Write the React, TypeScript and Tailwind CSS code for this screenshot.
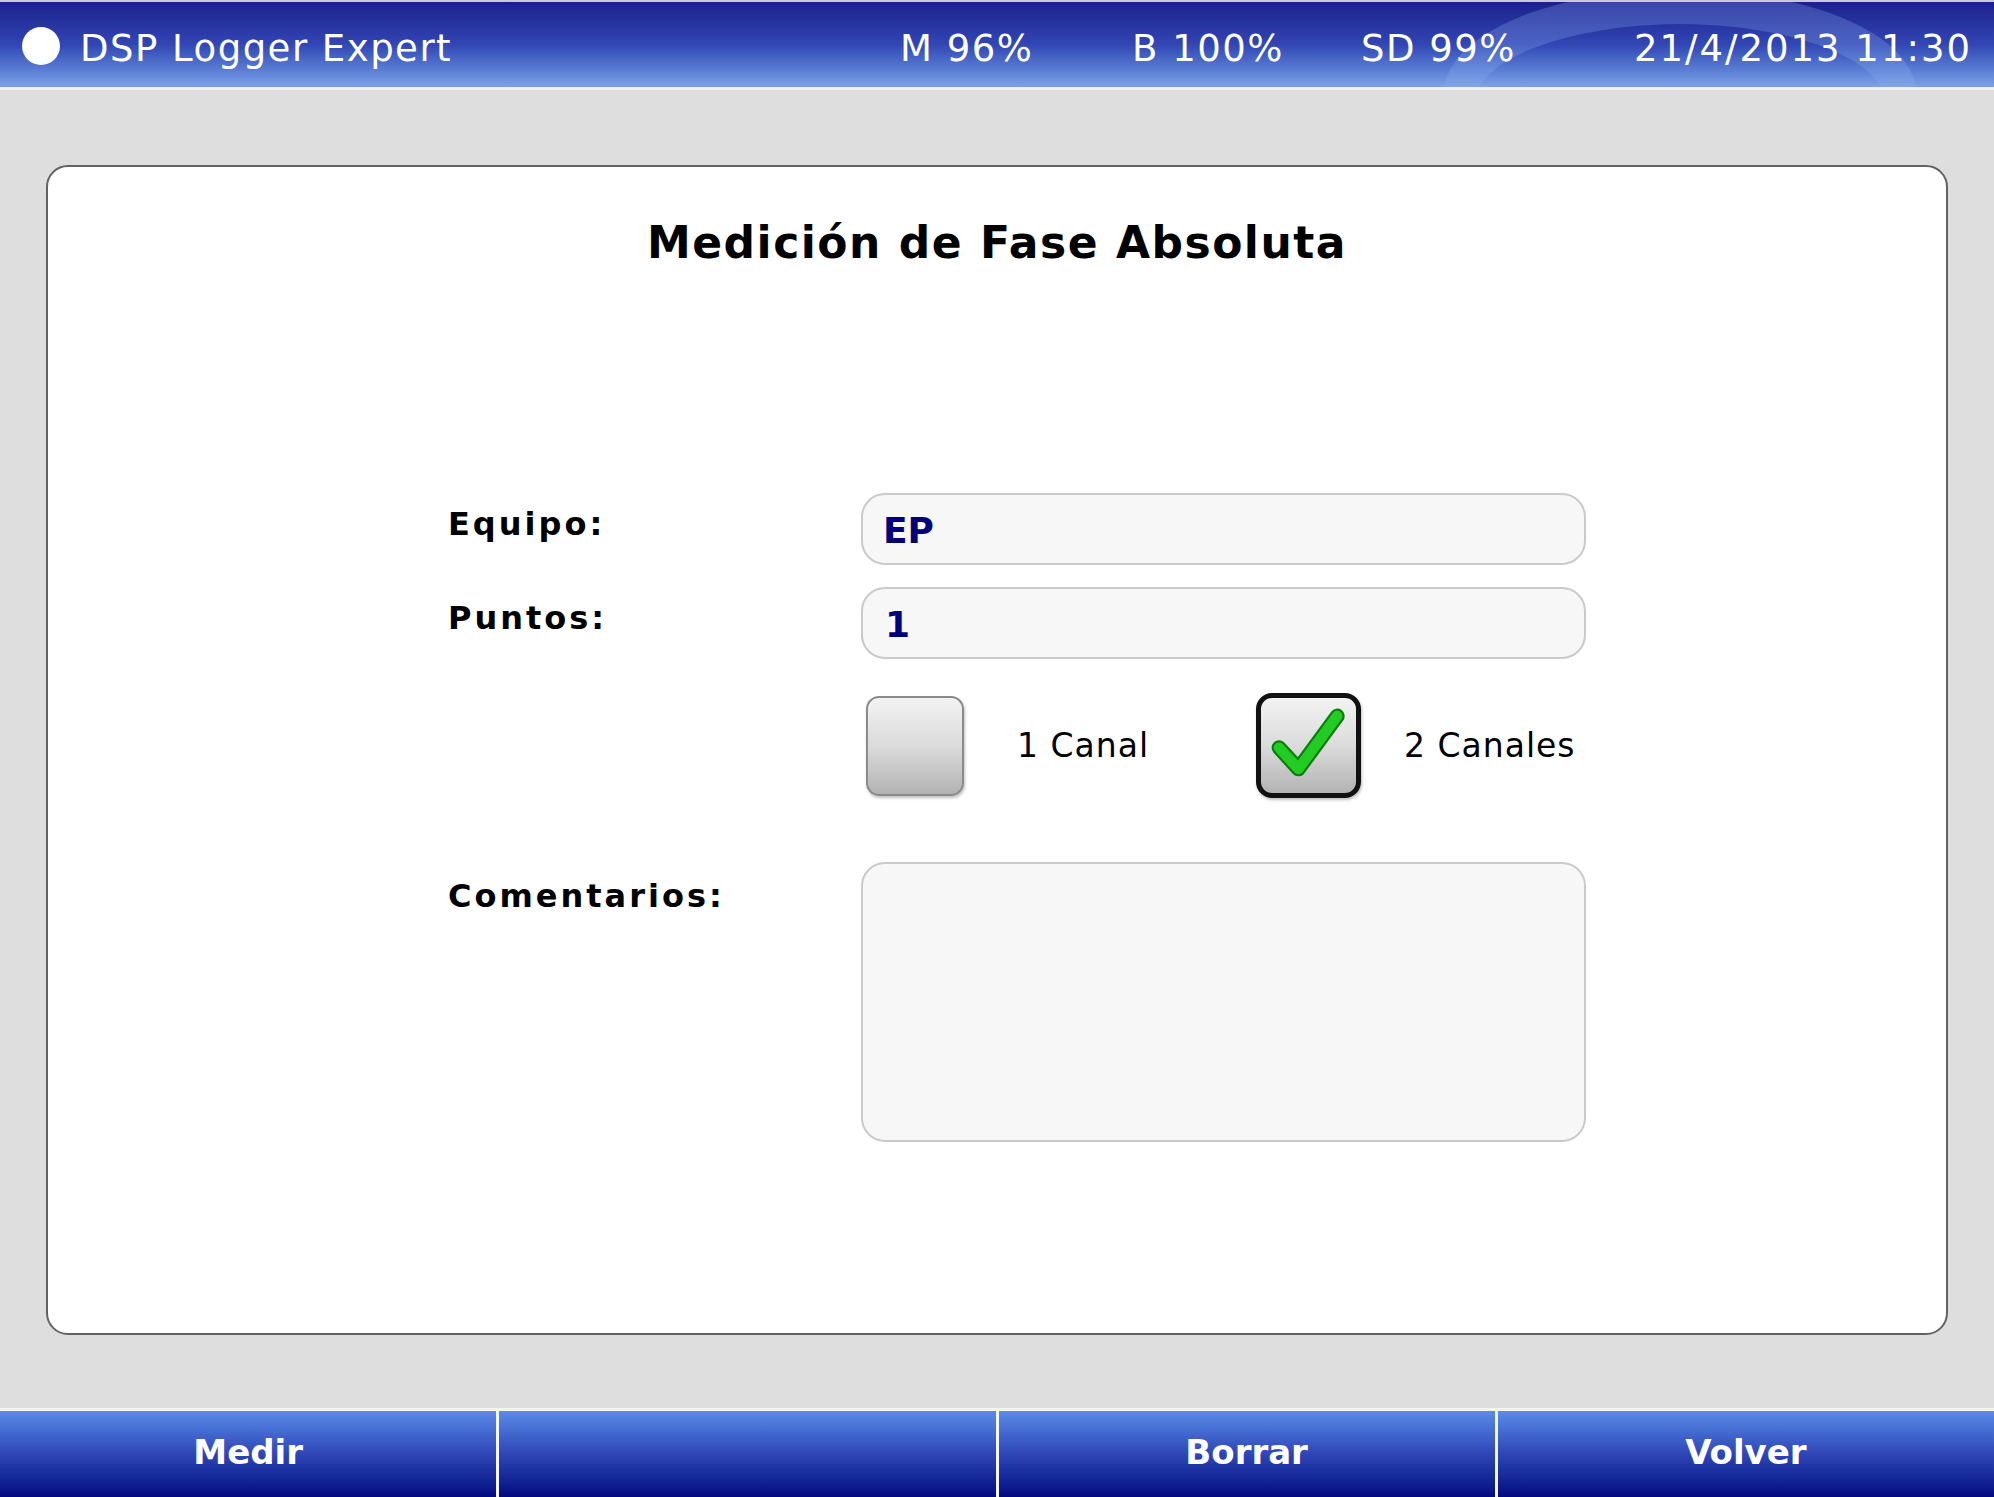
import React from "react";

const sans = { fontFamily: '"DejaVu Sans", Verdana, sans-serif' };

function CheckBox({ checked }: { checked?: boolean }) {
  return (
    <div
      className={`relative flex items-center justify-center bg-gradient-to-b from-[#f4f3f4] via-[#dcdbdc] to-[#b4b3b4] shadow-[1px_2px_3px_rgba(0,0,0,0.25)] ${
        checked
          ? "w-[105px] h-[105px] rounded-[16px] border-[5px] border-[#111]"
          : "w-[98px] h-[100px] rounded-[13px] border-2 border-[#8a8a8a]"
      }`}
    >
      {checked && (
        <svg viewBox="0 0 100 100" className="w-[88px] h-[88px]">
          <polyline
            points="16,52 38,76 82,16"
            fill="none"
            stroke="#0c7d0c"
            strokeWidth="17"
            strokeLinecap="round"
            strokeLinejoin="round"
          />
          <polyline
            points="16,52 38,76 82,16"
            fill="none"
            stroke="#22cc22"
            strokeWidth="12"
            strokeLinecap="round"
            strokeLinejoin="round"
          />
        </svg>
      )}
    </div>
  );
}

export default function App() {
  const buttons = ["Medir", "", "Borrar", "Volver"];

  return (
    <div className="w-[1994px] h-[1497px] flex flex-col bg-[#dedede] overflow-hidden" style={sans}>
      {/* top status bar */}
      <div className="relative h-[90px] shrink-0 border-t-2 border-[#c9c9d6] border-b-[3px] border-b-[#f2f0ea] bg-gradient-to-b from-[#1c1f8c] via-[#3246b4] to-[#7ba2e8] overflow-hidden">
        <svg className="absolute left-[1440px] top-0 w-[480px] h-[90px]" viewBox="0 0 480 90">
          <path d="M 20 95 A 220 90 0 0 1 460 95" fill="none" stroke="rgba(140,175,240,0.28)" strokeWidth="34" />
        </svg>
        <div className="relative h-full flex items-center pt-[8px] text-white text-[37px] leading-none tracking-[1.5px]">
          <div className="w-[900px] pl-[22px] flex items-center">
            <span className="w-[38px] h-[38px] rounded-full bg-white -mt-[6px]"></span>
            <span className="ml-[20px]">DSP Logger Expert</span>
          </div>
          <span className="w-[232px]">M 96%</span>
          <span className="w-[229px]">B 100%</span>
          <span className="w-[269px]">SD 99%</span>
          <span className="flex-1 text-right pr-[22px] tracking-[2px]">21/4/2013 11:30</span>
        </div>
      </div>

      {/* main panel */}
      <div className="flex-1 px-[46px] pt-[75px] pb-[73px]">
        <div className="h-full bg-white border-2 border-[#626262] rounded-[22px] flex flex-col">
          <h1 className="text-center font-bold text-[44px] text-black mt-[50px] leading-[52px] tracking-[1.5px]">
            Medición de Fase Absoluta
          </h1>

          <div className="mt-[224px] pl-[400px] text-[33px]">
            <div className="flex items-center">
              <span className="w-[413px] font-bold text-[32px] text-black tracking-[3px] -mt-[10px]">Equipo:</span>
              <div className="w-[725px] h-[72px] rounded-[24px] border-2 border-[#cacaca] bg-[#f7f7f7] flex items-center pl-[20px] pt-[4px]">
                <span className="font-bold text-[36px] text-[#00007a]">EP</span>
              </div>
            </div>

            <div className="flex items-center mt-[22px]">
              <span className="w-[413px] font-bold text-[32px] text-black tracking-[3px] -mt-[10px]">Puntos:</span>
              <div className="w-[725px] h-[72px] rounded-[24px] border-2 border-[#cacaca] bg-[#f7f7f7] flex items-center pl-[22px] pt-[4px]">
                <span className="font-bold text-[36px] text-[#00007a]">1</span>
              </div>
            </div>

            <div className="flex items-center mt-[34px] ml-[418px]">
              <div className="w-[390px] flex items-center">
                <CheckBox />
                <span className="ml-[53px] text-black tracking-[1px]">1 Canal</span>
              </div>
              <CheckBox checked />
              <span className="ml-[43px] text-black tracking-[1px]">2 Canales</span>
            </div>

            <div className="flex items-start mt-[64px]">
              <span className="w-[413px] font-bold text-[32px] text-black tracking-[3px] mt-[10px]">Comentarios:</span>
              <div className="w-[725px] h-[280px] rounded-[24px] border-2 border-[#cacaca] bg-[#f7f7f7]"></div>
            </div>
          </div>
        </div>
      </div>

      {/* bottom buttons */}
      <div className="h-[89px] shrink-0 flex gap-[3px] bg-[#f6f6f6] border-t-[3px] border-[#f4f2ec]">
        {buttons.map((b, i) => (
          <button
            key={i}
            className="flex-1 flex items-center justify-center pb-[4px] bg-gradient-to-b from-[#5b8ce8] via-[#2f45b6] to-[#050780] text-white font-bold text-[34px]"
          >
            {b}
          </button>
        ))}
      </div>
    </div>
  );
}
